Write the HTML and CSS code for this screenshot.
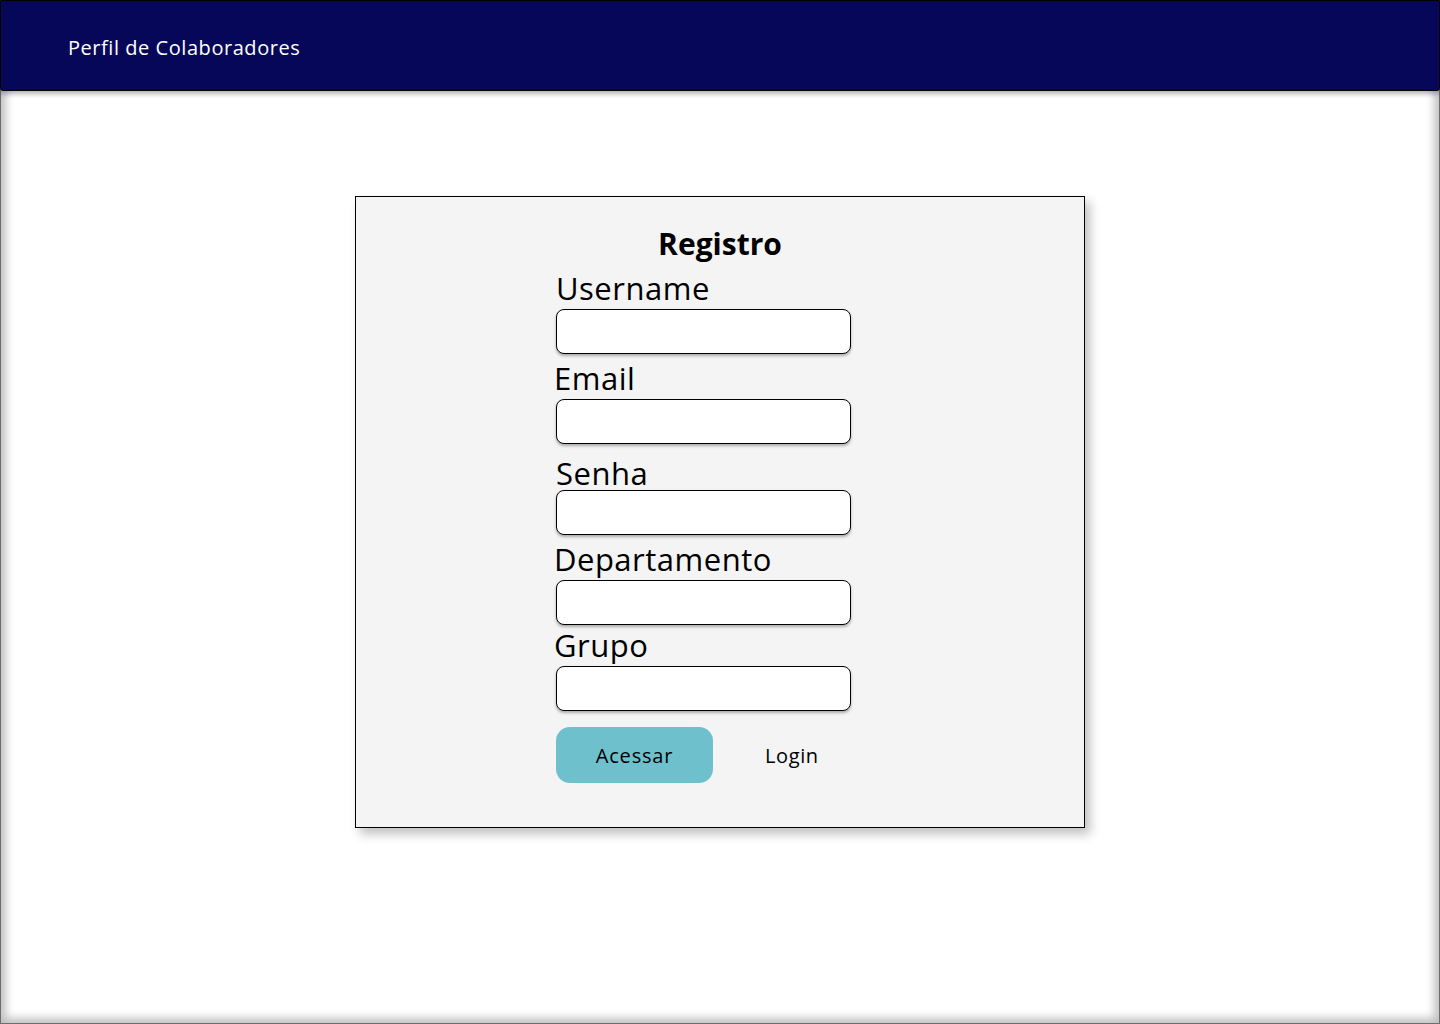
FILE: index.html
```html
<!DOCTYPE html>
<html lang="pt">
<head>
<meta charset="utf-8">
<title>Perfil de Colaboradores</title>
<link rel="stylesheet" href="styles.css">
</head>
<body>
<div class="app">
  <header class="topbar">
    <span class="brand">Perfil de Colaboradores</span>
  </header>
  <main class="main">
    <section class="card">
      <h1 class="title">Registro</h1>
      <form class="form">
        <div class="field">
          <label class="label">Username</label>
          <input class="input" type="text">
        </div>
        <div class="field">
          <label class="label label-tight">Email</label>
          <input class="input" type="text">
        </div>
        <div class="field field-senha">
          <label class="label">Senha</label>
          <input class="input" type="password">
        </div>
        <div class="field">
          <label class="label label-tight">Departamento</label>
          <input class="input" type="text">
        </div>
        <div class="field field-grupo">
          <label class="label label-tight">Grupo</label>
          <input class="input" type="text">
        </div>
        <div class="actions">
          <button class="btn" type="button">Acessar</button>
          <span class="link">Login</span>
        </div>
      </form>
    </section>
  </main>
</div>
</body>
</html>
```

FILE: styles.css
```css
* { box-sizing: border-box; }
html, body { margin: 0; padding: 0; }
body {
  font-family: "Open Sans", "Noto Sans", sans-serif;
  color: #000;
  background: #fff;
}
.app {
  width: 1440px;
  height: 1024px;
  background: #fff;
  box-shadow: inset 0 0 0 1px #6e6e6e, inset 0 0 9px 6px #c2c2c2;
  overflow: hidden;
}
.topbar {
  height: 91px;
  background: #07075a;
  border: 1px solid #000;
  border-radius: 0 0 3px 3px;
  box-shadow: 0 3px 5px rgba(0,0,0,0.3);
  display: flex;
  align-items: center;
  padding: 4px 0 0 67px;
  position: relative;
}
.brand {
  color: #fff;
  font-size: 20px;
  letter-spacing: 0.55px;
}
.main {
  display: flex;
  justify-content: center;
  padding-top: 105px;
}
.card {
  width: 730px;
  height: 632px;
  background: #f4f4f4;
  border: 1px solid #000;
  box-shadow: 5px 6px 10px rgba(0,0,0,0.25);
  padding: 29px 0 0 200px;
}
.title {
  margin: 0 0 0 -200px;
  font-size: 30px;
  line-height: 36px;
  font-weight: 700;
  text-align: center;
}
.form {
  width: 295px;
  margin-top: 8px;
}
.field {
  margin-bottom: 6px;
}
.label {
  display: block;
  font-size: 31px;
  line-height: 36px;
  letter-spacing: 0.5px;
  margin-bottom: 3px;
}
.label-tight { margin-left: -2px; }
.field-senha .label { padding-top: 5px; margin-bottom: -1px; }
.field-grupo { margin-top: -4px; }
.input {
  display: block;
  width: 295px;
  height: 45px;
  background: #fff;
  border: 1px solid #000;
  border-radius: 8px;
  box-shadow: 0 2px 3px rgba(0,0,0,0.3);
  outline: none;
}
.actions {
  display: flex;
  align-items: center;
  margin-top: 16px;
}
.btn {
  width: 157px;
  height: 56px;
  background: #6ec0cc;
  border: none;
  border-radius: 14px;
  font-family: inherit;
  font-size: 20px;
  letter-spacing: 0.8px;
  color: #000;
  padding: 0;
}
.link {
  margin-left: 52px;
  font-size: 20px;
  letter-spacing: 0.6px;
}
```
